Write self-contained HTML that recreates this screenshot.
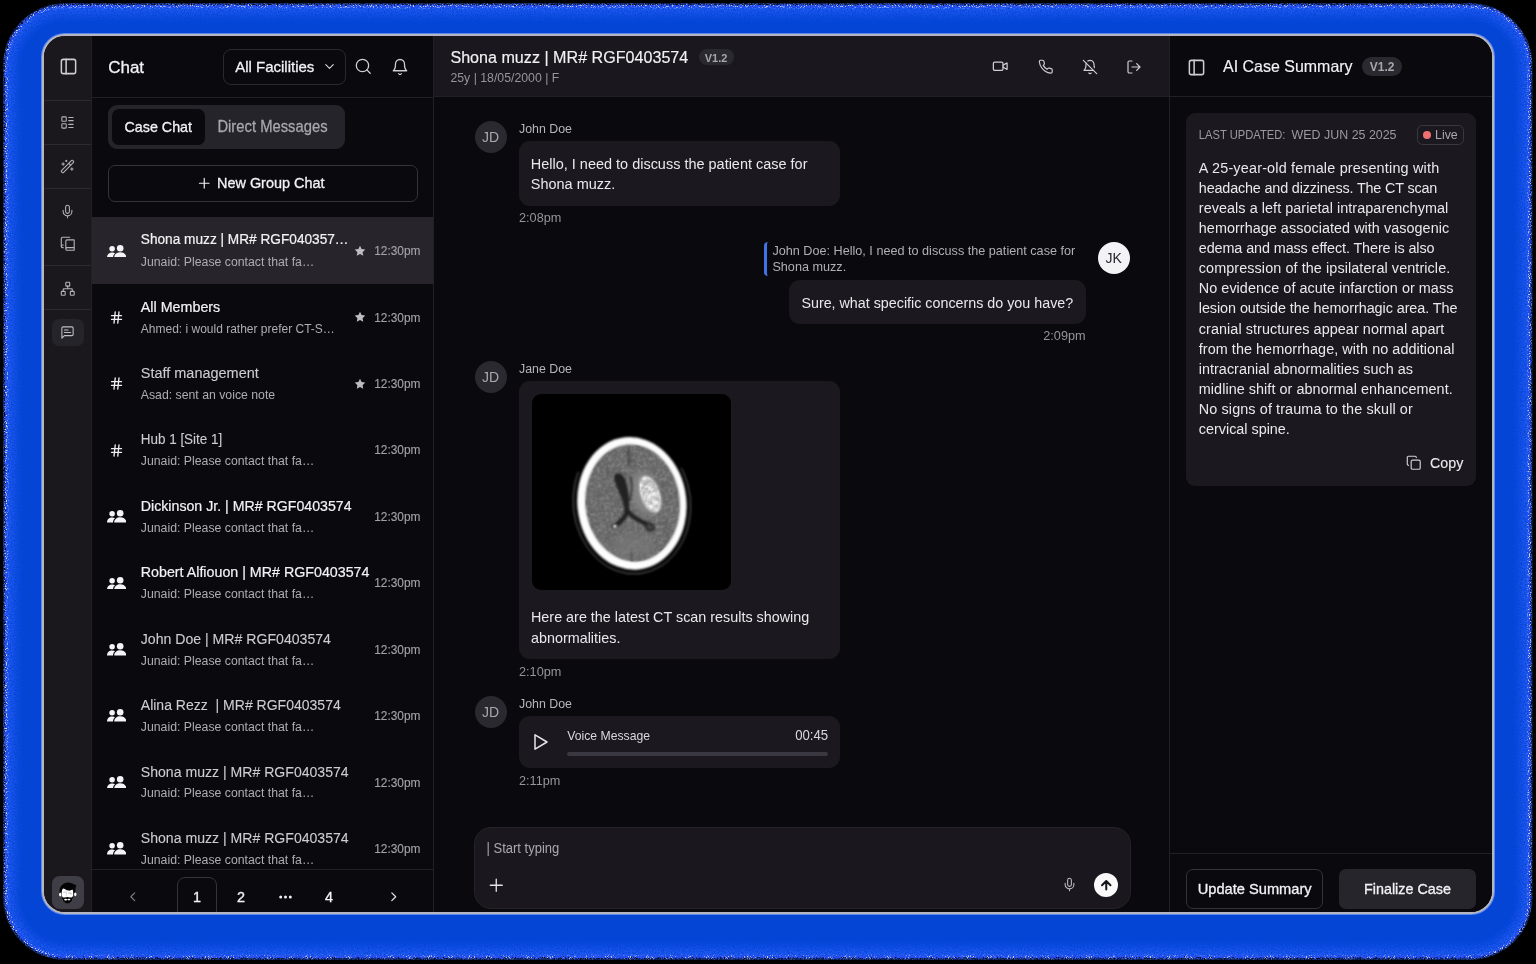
<!DOCTYPE html>
<html><head><meta charset="utf-8"><title>Chat</title>
<style>
html,body{margin:0;padding:0;background:#000;width:1536px;height:964px;overflow:hidden}
body{font-family:"Liberation Sans",sans-serif;position:relative}
.a{position:absolute}
.t{white-space:nowrap;margin:0;transform:scaleY(1.06);transform-origin:50% 52%}
#win{position:absolute;left:42px;top:34px;width:1452.4px;height:880.4px;box-sizing:border-box;border:2px solid #b6b6c0;border-radius:23px;overflow:hidden;background:#0a090d;box-shadow:0 0 0 1px #5d88ec}
#c{will-change:transform;position:absolute;left:-44px;top:-36px;width:1536px;height:964px}
</style></head><body>
<svg class="a" style="left:0;top:0" width="1536" height="964" viewBox="0 0 1536 964">
<defs>
<filter id="rough" x="-1%" y="-1%" width="102%" height="102%">
<feTurbulence type="fractalNoise" baseFrequency="0.85" numOctaves="2" seed="3" result="n"/>
<feDisplacementMap in="SourceGraphic" in2="n" scale="5" xChannelSelector="R" yChannelSelector="G"/>
</filter>
<filter id="glow" x="-2%" y="-2%" width="104%" height="104%">
<feGaussianBlur in="SourceGraphic" stdDeviation="4.5" result="bl"/>
<feTurbulence type="fractalNoise" baseFrequency="0.7" numOctaves="2" seed="8" result="n"/>
<feColorMatrix in="n" type="matrix" values="0 0 0 0 1  0 0 0 0 1  0 0 0 0 1  2.2 0 0 0 -0.45" result="na"/>
<feComposite in="bl" in2="na" operator="in"/>
</filter>
<filter id="spk" x="-2%" y="-2%" width="104%" height="104%">
<feGaussianBlur in="SourceGraphic" stdDeviation="1.2" result="bl"/>
<feTurbulence type="fractalNoise" baseFrequency="0.95" numOctaves="1" seed="21" result="n"/>
<feColorMatrix in="n" type="matrix" values="0 0 0 0 1  0 0 0 0 1  0 0 0 0 1  0 9 0 0 -5.1" result="na"/>
<feComposite in="bl" in2="na" operator="in"/>
</filter>
<clipPath id="fc"><rect x="3" y="3" width="1529.5" height="957" rx="62" ry="62"/></clipPath>
</defs>
<rect x="5" y="5" width="1525.5" height="953" rx="60" ry="60" fill="#1c3fe0" filter="url(#rough)"/>
<rect x="8" y="8" width="1519.5" height="947" rx="57" ry="57" fill="#0445d6"/>
<g clip-path="url(#fc)">
<rect x="8" y="8" width="1519.5" height="947" rx="57" ry="57" fill="none" stroke="#2f63ff" stroke-width="15" filter="url(#glow)" opacity="0.75"/>
<rect x="6" y="6" width="1523.5" height="951" rx="59" ry="59" fill="none" stroke="#ffffff" stroke-width="3.2" filter="url(#spk)" opacity="0.95"/>
</g>
</svg>
<div id="win"><div id="c">
<div class="a" style="left:0.00px;top:0.00px;width:1536.00px;height:964.00px;background:#0a090d;"></div>
<div class="a" style="left:40.00px;top:30.00px;width:51.50px;height:900.00px;background:#1a181d;"></div>
<div class="a" style="left:91.00px;top:30.00px;width:1.00px;height:900.00px;background:#222027;"></div>
<div class="a" style="left:433.00px;top:30.00px;width:1.00px;height:900.00px;background:#222027;"></div>
<div class="a" style="left:434.00px;top:30.00px;width:736.00px;height:66.00px;background:#1a181e;"></div>
<div class="a" style="left:92.00px;top:97.00px;width:341.00px;height:1.00px;background:#222027;"></div>
<div class="a" style="left:434.00px;top:96.00px;width:1070.00px;height:1.00px;background:#222027;"></div>
<div class="a" style="left:1169.00px;top:30.00px;width:1.00px;height:900.00px;background:#222027;"></div>
<div class="a" style="left:40.00px;top:100.00px;width:51.00px;height:1.00px;background:#2c2a31;"></div>
<div class="a" style="left:40.00px;top:144.00px;width:51.00px;height:1.00px;background:#2c2a31;"></div>
<div class="a" style="left:40.00px;top:188.00px;width:51.00px;height:1.00px;background:#2c2a31;"></div>
<div class="a" style="left:40.00px;top:265.00px;width:51.00px;height:1.00px;background:#2c2a31;"></div>
<div class="a" style="left:40.00px;top:309.00px;width:51.00px;height:1.00px;background:#2c2a31;"></div>
<svg class="a" style="left:58.70px;top:57.00px" width="19" height="19" viewBox="0 0 24 24" fill="none" stroke="#cfced4" stroke-width="1.9" stroke-linecap="round" stroke-linejoin="round" ><rect x="3" y="3" width="18" height="18" rx="2.5"/><path d="M9 3v18"/></svg>
<svg class="a" style="left:60.20px;top:115.20px" width="15" height="15" viewBox="0 0 24 24" fill="none" stroke="#b4b3ba" stroke-width="1.7" stroke-linecap="round" stroke-linejoin="round" ><rect x="3" y="3" width="7" height="7" rx="1"/><rect x="3" y="14" width="7" height="7" rx="1"/><path d="M14 4h7M14 9h7M14 15h7M14 20h7"/></svg>
<svg class="a" style="left:60.20px;top:159.30px" width="15" height="15" viewBox="0 0 24 24" fill="none" stroke="#b4b3ba" stroke-width="1.7" stroke-linecap="round" stroke-linejoin="round" ><path d="m21.64 3.64-1.28-1.28a1.21 1.21 0 0 0-1.72 0L2.36 18.64a1.21 1.21 0 0 0 0 1.72l1.28 1.28a1.2 1.2 0 0 0 1.72 0L21.64 5.36a1.2 1.2 0 0 0 0-1.72"/><path d="m14 7 3 3M5 6v4M19 14v4M10 2v2M7 8H3M21 16h-4M11 3H9"/></svg>
<svg class="a" style="left:60.20px;top:204.00px" width="15" height="15" viewBox="0 0 24 24" fill="none" stroke="#b4b3ba" stroke-width="1.7" stroke-linecap="round" stroke-linejoin="round" ><path d="M12 2a3 3 0 0 0-3 3v7a3 3 0 0 0 6 0V5a3 3 0 0 0-3-3Z"/><path d="M19 10v2a7 7 0 0 1-14 0v-2M12 19v3"/></svg>
<svg class="a" style="left:59.95px;top:236.25px" width="15.5" height="15.5" viewBox="0 0 24 24" fill="none" stroke="#b4b3ba" stroke-width="1.7" stroke-linecap="round" stroke-linejoin="round" ><path d="M2 16V4a2 2 0 0 1 2-2h11"/><path d="M22 18H11a2 2 0 1 0 0 4h10.5a.5.5 0 0 0 .5-.5v-15a.5.5 0 0 0-.5-.5H11a2 2 0 0 0-2 2v12"/><path d="M5 14H4a2 2 0 1 0 0 4h1"/></svg>
<svg class="a" style="left:59.95px;top:281.25px" width="15.5" height="15.5" viewBox="0 0 24 24" fill="none" stroke="#b4b3ba" stroke-width="1.7" stroke-linecap="round" stroke-linejoin="round" ><rect x="16" y="16" width="6" height="6" rx="1"/><rect x="2" y="16" width="6" height="6" rx="1"/><rect x="9" y="2" width="6" height="6" rx="1"/><path d="M5 16v-3a1 1 0 0 1 1-1h12a1 1 0 0 1 1 1v3M12 12V8"/></svg>
<div class="a" style="left:52.00px;top:318.50px;width:32.00px;height:27.50px;background:#26242b;border-radius:7px;"></div>
<svg class="a" style="left:60.20px;top:325.00px" width="15" height="15" viewBox="0 0 24 24" fill="none" stroke="#c0bfc6" stroke-width="1.7" stroke-linecap="round" stroke-linejoin="round" ><path d="M21 15a2 2 0 0 1-2 2H7l-4 4V5a2 2 0 0 1 2-2h14a2 2 0 0 1 2 2z"/><path d="M13 8H7M17 12H7"/></svg>
<div class="a" style="left:52.00px;top:876.00px;width:32.00px;height:33.00px;background:#3f3d45;border-radius:7.5px;"></div>
<svg class="a" style="left:58.3px;top:881.7px" width="20" height="22" viewBox="0 0 20 22">
<ellipse cx="2.2" cy="12.6" rx="1.1" ry="1.9" fill="#fff"/><ellipse cx="17.3" cy="12.3" rx="1.1" ry="1.9" fill="#fff"/>
<path d="M3.8 9 C3.8 4.6 15 4.6 15 9 L15 14 C15 19.6 12.4 21 9.4 21 C6.4 21 3.8 19.6 3.8 14 Z" fill="#fff"/>
<path d="M1.7 10.2 C1 5.5 4 1.2 9.2 0.5 C12 0 15.4 2.2 18.6 3.5 C17.2 4.6 17.6 6.4 17.3 10.4 L15.4 10.2 C15.4 8.4 15 7.8 14.6 7.6 C13 8.6 11.6 8.8 10.4 8.6 C8.4 8.2 6.6 7 5 6 C4 7.2 3.8 8.6 3.6 10.2 Z" fill="#040405"/>
<path d="M3.7 13.4 C3.7 19.6 6.4 21.2 9.4 21.2 C12.4 21.2 15.2 19.6 15.2 13.4 C14.6 15.4 13.4 15.6 12.2 15.5 L9.4 15.1 L6.6 15.5 C5.4 15.6 4.3 15.4 3.7 13.4 Z" fill="#040405"/>
<ellipse cx="7.6" cy="17.6" rx="1.5" ry="0.85" fill="#fff"/><ellipse cx="10.9" cy="17.5" rx="1.5" ry="0.85" fill="#fff"/>
<path d="M5.4 10.4 C6 9.8 7.2 9.8 7.8 10.6 M10.2 11 L13 11 L13 12.4" stroke="#a9a9b0" stroke-width="0.8" fill="none"/><path d="M8.8 9.4 L8.2 13.6" stroke="#c4c4cb" stroke-width="0.7"/>
</svg>
<div class="a t" style="left:108.20px;top:55.60px;font-size:17px;line-height:24px;color:#f2f2f4;-webkit-text-stroke:0.3px #f2f2f4;transform:scaleY(0.95);">Chat</div>
<div class="a" style="left:223.00px;top:49.00px;width:123.00px;height:36.00px;border-radius:8px;border:1px solid #2b2930;box-sizing:border-box;"></div>
<div class="a t" style="left:235.20px;top:56.80px;font-size:15px;line-height:20px;color:#f2f2f4;-webkit-text-stroke:0.3px #f2f2f4;transform:none;">All Facilities</div>
<svg class="a" style="left:322.00px;top:59.30px" width="15" height="15" viewBox="0 0 24 24" fill="none" stroke="#d8d7dc" stroke-width="1.8" stroke-linecap="round" stroke-linejoin="round" ><path d="m6 9 6 6 6-6"/></svg>
<svg class="a" style="left:354.25px;top:57.25px" width="18.5" height="18.5" viewBox="0 0 24 24" fill="none" stroke="#cfced4" stroke-width="1.7" stroke-linecap="round" stroke-linejoin="round" ><circle cx="11" cy="11" r="8"/><path d="m21 21-4.3-4.3"/></svg>
<svg class="a" style="left:391.00px;top:58.00px" width="18" height="18" viewBox="0 0 24 24" fill="none" stroke="#cfced4" stroke-width="1.7" stroke-linecap="round" stroke-linejoin="round" ><path d="M6 8a6 6 0 0 1 12 0c0 7 3 9 3 9H3s3-2 3-9"/><path d="M10.3 21a1.94 1.94 0 0 0 3.4 0"/></svg>
<div class="a" style="left:108.00px;top:105.00px;width:237.00px;height:44.00px;background:#26242b;border-radius:9px;"></div>
<div class="a" style="left:112.00px;top:109.00px;width:92.50px;height:36.00px;background:#0a090d;border-radius:7px;"></div>
<div class="a t" style="left:124.50px;top:117.00px;font-size:14.3px;line-height:20px;color:#f2f2f4;-webkit-text-stroke:0.3px #f2f2f4;">Case Chat</div>
<div class="a t" style="left:217.40px;top:117.00px;font-size:14.8px;line-height:20px;color:#a9a7ae;-webkit-text-stroke:0.25px #a9a7ae;">Direct Messages</div>
<div class="a" style="left:108.00px;top:165.00px;width:310.00px;height:36.50px;border-radius:7px;border:1px solid #35333a;box-sizing:border-box;"></div>
<svg class="a" style="left:196.35px;top:175.15px" width="16.5" height="16.5" viewBox="0 0 24 24" fill="none" stroke="#f2f2f4" stroke-width="1.7" stroke-linecap="round" stroke-linejoin="round" ><path d="M5 12h14M12 5v14"/></svg>
<div class="a t" style="left:217.00px;top:173.30px;font-size:14.45px;line-height:20px;color:#f2f2f4;-webkit-text-stroke:0.3px #f2f2f4;">New Group Chat</div>
<div class="a" style="left:92.00px;top:217.00px;width:341.00px;height:67.00px;background:#27242b;"></div>
<svg class="a" style="left:106.60px;top:244.50px" width="19.4" height="12.6" viewBox="0 0 19.4 12.6" fill="#f4f4f6">
<circle cx="5.1" cy="3.7" r="2.75"/><circle cx="13.2" cy="3.3" r="3.3"/>
<path d="M7.2 12.6 C7.2 9.2 10 7.3 13.2 7.3 C16.5 7.3 19.4 9.2 19.4 12.6 Z"/>
<path d="M0 12.6 C0 9.4 2.2 7.5 5.1 7.5 C6.3 7.5 7.4 7.8 8.1 8.3 C6.7 9.3 6.1 10.8 6 12.6 Z"/></svg>
<div class="a t" style="left:140.80px;top:230.30px;font-size:13.67px;line-height:20px;color:#f2f2f4;-webkit-text-stroke:0.2px #f2f2f4;white-space:pre;transform:scaleY(1.12);">Shona muzz | MR# RGF040357…</div>
<div class="a t" style="left:140.80px;top:254.10px;font-size:12.29px;line-height:16px;color:#aeadb4;">Junaid: Please contact that fa…</div>
<svg class="a" style="left:353.60px;top:244.90px" width="12" height="12" viewBox="0 0 24 24" fill="#bdbcc3"><path d="M12 1.5l3.2 6.7 7.3 1-5.3 5.1 1.3 7.3L12 18.1l-6.5 3.5 1.3-7.3L1.5 9.2l7.3-1z"/></svg>
<div class="a t" style="left:374.20px;top:243.20px;font-size:11.9px;line-height:16px;color:#a3a2a9;-webkit-text-stroke:0.12px #a3a2a9;">12:30pm</div>
<svg class="a" style="left:108.50px;top:309.72px" width="15" height="15" viewBox="0 0 24 24" fill="none" stroke="#f0f0f3" stroke-width="2.1" stroke-linecap="round" stroke-linejoin="round" ><path d="M4 9h16M4 15h16M10 3 8 21M16 3l-2 18"/></svg>
<div class="a t" style="left:140.80px;top:296.72px;font-size:14.31px;line-height:20px;color:#f2f2f4;-webkit-text-stroke:0.2px #f2f2f4;white-space:pre;">All Members</div>
<div class="a t" style="left:140.80px;top:320.52px;font-size:12.01px;line-height:16px;color:#aeadb4;">Ahmed: i would rather prefer CT-S…</div>
<svg class="a" style="left:353.60px;top:311.32px" width="12" height="12" viewBox="0 0 24 24" fill="#bdbcc3"><path d="M12 1.5l3.2 6.7 7.3 1-5.3 5.1 1.3 7.3L12 18.1l-6.5 3.5 1.3-7.3L1.5 9.2l7.3-1z"/></svg>
<div class="a t" style="left:374.20px;top:309.62px;font-size:11.9px;line-height:16px;color:#a3a2a9;-webkit-text-stroke:0.12px #a3a2a9;">12:30pm</div>
<svg class="a" style="left:108.50px;top:376.14px" width="15" height="15" viewBox="0 0 24 24" fill="none" stroke="#f0f0f3" stroke-width="2.1" stroke-linecap="round" stroke-linejoin="round" ><path d="M4 9h16M4 15h16M10 3 8 21M16 3l-2 18"/></svg>
<div class="a t" style="left:140.80px;top:363.14px;font-size:14.47px;line-height:20px;color:#cdccd2;-webkit-text-stroke:0.1px #cdccd2;white-space:pre;">Staff management</div>
<div class="a t" style="left:140.80px;top:386.94px;font-size:12.27px;line-height:16px;color:#aeadb4;">Asad: sent an voice note</div>
<svg class="a" style="left:353.60px;top:377.74px" width="12" height="12" viewBox="0 0 24 24" fill="#bdbcc3"><path d="M12 1.5l3.2 6.7 7.3 1-5.3 5.1 1.3 7.3L12 18.1l-6.5 3.5 1.3-7.3L1.5 9.2l7.3-1z"/></svg>
<div class="a t" style="left:374.20px;top:376.04px;font-size:11.9px;line-height:16px;color:#a3a2a9;-webkit-text-stroke:0.12px #a3a2a9;">12:30pm</div>
<svg class="a" style="left:108.50px;top:442.56px" width="15" height="15" viewBox="0 0 24 24" fill="none" stroke="#f0f0f3" stroke-width="2.1" stroke-linecap="round" stroke-linejoin="round" ><path d="M4 9h16M4 15h16M10 3 8 21M16 3l-2 18"/></svg>
<div class="a t" style="left:140.80px;top:429.56px;font-size:13.45px;line-height:20px;color:#cdccd2;-webkit-text-stroke:0.1px #cdccd2;white-space:pre;">Hub 1 [Site 1]</div>
<div class="a t" style="left:140.80px;top:453.36px;font-size:12.29px;line-height:16px;color:#aeadb4;">Junaid: Please contact that fa…</div>
<div class="a t" style="left:374.20px;top:442.46px;font-size:11.9px;line-height:16px;color:#a3a2a9;-webkit-text-stroke:0.12px #a3a2a9;">12:30pm</div>
<svg class="a" style="left:106.60px;top:510.18px" width="19.4" height="12.6" viewBox="0 0 19.4 12.6" fill="#f4f4f6">
<circle cx="5.1" cy="3.7" r="2.75"/><circle cx="13.2" cy="3.3" r="3.3"/>
<path d="M7.2 12.6 C7.2 9.2 10 7.3 13.2 7.3 C16.5 7.3 19.4 9.2 19.4 12.6 Z"/>
<path d="M0 12.6 C0 9.4 2.2 7.5 5.1 7.5 C6.3 7.5 7.4 7.8 8.1 8.3 C6.7 9.3 6.1 10.8 6 12.6 Z"/></svg>
<div class="a t" style="left:140.80px;top:495.98px;font-size:14.18px;line-height:20px;color:#f2f2f4;-webkit-text-stroke:0.2px #f2f2f4;white-space:pre;">Dickinson Jr. | MR# RGF0403574</div>
<div class="a t" style="left:140.80px;top:519.78px;font-size:12.29px;line-height:16px;color:#aeadb4;">Junaid: Please contact that fa…</div>
<div class="a t" style="left:374.20px;top:508.88px;font-size:11.9px;line-height:16px;color:#a3a2a9;-webkit-text-stroke:0.12px #a3a2a9;">12:30pm</div>
<svg class="a" style="left:106.60px;top:576.60px" width="19.4" height="12.6" viewBox="0 0 19.4 12.6" fill="#f4f4f6">
<circle cx="5.1" cy="3.7" r="2.75"/><circle cx="13.2" cy="3.3" r="3.3"/>
<path d="M7.2 12.6 C7.2 9.2 10 7.3 13.2 7.3 C16.5 7.3 19.4 9.2 19.4 12.6 Z"/>
<path d="M0 12.6 C0 9.4 2.2 7.5 5.1 7.5 C6.3 7.5 7.4 7.8 8.1 8.3 C6.7 9.3 6.1 10.8 6 12.6 Z"/></svg>
<div class="a t" style="left:140.80px;top:562.40px;font-size:14.26px;line-height:20px;color:#f2f2f4;-webkit-text-stroke:0.2px #f2f2f4;white-space:pre;">Robert Alfiouon | MR# RGF0403574</div>
<div class="a t" style="left:140.80px;top:586.20px;font-size:12.29px;line-height:16px;color:#aeadb4;">Junaid: Please contact that fa…</div>
<div class="a t" style="left:374.20px;top:575.30px;font-size:11.9px;line-height:16px;color:#a3a2a9;-webkit-text-stroke:0.12px #a3a2a9;">12:30pm</div>
<svg class="a" style="left:106.60px;top:643.02px" width="19.4" height="12.6" viewBox="0 0 19.4 12.6" fill="#f4f4f6">
<circle cx="5.1" cy="3.7" r="2.75"/><circle cx="13.2" cy="3.3" r="3.3"/>
<path d="M7.2 12.6 C7.2 9.2 10 7.3 13.2 7.3 C16.5 7.3 19.4 9.2 19.4 12.6 Z"/>
<path d="M0 12.6 C0 9.4 2.2 7.5 5.1 7.5 C6.3 7.5 7.4 7.8 8.1 8.3 C6.7 9.3 6.1 10.8 6 12.6 Z"/></svg>
<div class="a t" style="left:140.80px;top:628.82px;font-size:14.1px;line-height:20px;color:#cdccd2;-webkit-text-stroke:0.1px #cdccd2;white-space:pre;">John Doe | MR# RGF0403574</div>
<div class="a t" style="left:140.80px;top:652.62px;font-size:12.29px;line-height:16px;color:#aeadb4;">Junaid: Please contact that fa…</div>
<div class="a t" style="left:374.20px;top:641.72px;font-size:11.9px;line-height:16px;color:#a3a2a9;-webkit-text-stroke:0.12px #a3a2a9;">12:30pm</div>
<svg class="a" style="left:106.60px;top:709.44px" width="19.4" height="12.6" viewBox="0 0 19.4 12.6" fill="#f4f4f6">
<circle cx="5.1" cy="3.7" r="2.75"/><circle cx="13.2" cy="3.3" r="3.3"/>
<path d="M7.2 12.6 C7.2 9.2 10 7.3 13.2 7.3 C16.5 7.3 19.4 9.2 19.4 12.6 Z"/>
<path d="M0 12.6 C0 9.4 2.2 7.5 5.1 7.5 C6.3 7.5 7.4 7.8 8.1 8.3 C6.7 9.3 6.1 10.8 6 12.6 Z"/></svg>
<div class="a t" style="left:140.80px;top:695.24px;font-size:14.03px;line-height:20px;color:#cdccd2;-webkit-text-stroke:0.1px #cdccd2;white-space:pre;">Alina Rezz  | MR# RGF0403574</div>
<div class="a t" style="left:140.80px;top:719.04px;font-size:12.29px;line-height:16px;color:#aeadb4;">Junaid: Please contact that fa…</div>
<div class="a t" style="left:374.20px;top:708.14px;font-size:11.9px;line-height:16px;color:#a3a2a9;-webkit-text-stroke:0.12px #a3a2a9;">12:30pm</div>
<svg class="a" style="left:106.60px;top:775.86px" width="19.4" height="12.6" viewBox="0 0 19.4 12.6" fill="#f4f4f6">
<circle cx="5.1" cy="3.7" r="2.75"/><circle cx="13.2" cy="3.3" r="3.3"/>
<path d="M7.2 12.6 C7.2 9.2 10 7.3 13.2 7.3 C16.5 7.3 19.4 9.2 19.4 12.6 Z"/>
<path d="M0 12.6 C0 9.4 2.2 7.5 5.1 7.5 C6.3 7.5 7.4 7.8 8.1 8.3 C6.7 9.3 6.1 10.8 6 12.6 Z"/></svg>
<div class="a t" style="left:140.80px;top:761.66px;font-size:14.09px;line-height:20px;color:#cdccd2;-webkit-text-stroke:0.1px #cdccd2;white-space:pre;">Shona muzz | MR# RGF0403574</div>
<div class="a t" style="left:140.80px;top:785.46px;font-size:12.29px;line-height:16px;color:#aeadb4;">Junaid: Please contact that fa…</div>
<div class="a t" style="left:374.20px;top:774.56px;font-size:11.9px;line-height:16px;color:#a3a2a9;-webkit-text-stroke:0.12px #a3a2a9;">12:30pm</div>
<svg class="a" style="left:106.60px;top:842.28px" width="19.4" height="12.6" viewBox="0 0 19.4 12.6" fill="#f4f4f6">
<circle cx="5.1" cy="3.7" r="2.75"/><circle cx="13.2" cy="3.3" r="3.3"/>
<path d="M7.2 12.6 C7.2 9.2 10 7.3 13.2 7.3 C16.5 7.3 19.4 9.2 19.4 12.6 Z"/>
<path d="M0 12.6 C0 9.4 2.2 7.5 5.1 7.5 C6.3 7.5 7.4 7.8 8.1 8.3 C6.7 9.3 6.1 10.8 6 12.6 Z"/></svg>
<div class="a t" style="left:140.80px;top:828.08px;font-size:14.09px;line-height:20px;color:#cdccd2;-webkit-text-stroke:0.1px #cdccd2;white-space:pre;">Shona muzz | MR# RGF0403574</div>
<div class="a t" style="left:140.80px;top:851.88px;font-size:12.29px;line-height:16px;color:#aeadb4;">Junaid: Please contact that fa…</div>
<div class="a t" style="left:374.20px;top:840.98px;font-size:11.9px;line-height:16px;color:#a3a2a9;-webkit-text-stroke:0.12px #a3a2a9;">12:30pm</div>
<div class="a" style="left:92.00px;top:869.00px;width:341.00px;height:50.00px;background:#0a090d;"></div>
<div class="a" style="left:92.00px;top:868.50px;width:341.00px;height:1.00px;background:#222027;"></div>
<svg class="a" style="left:124.55px;top:889.25px" width="15.5" height="15.5" viewBox="0 0 24 24" fill="none" stroke="#7d7b83" stroke-width="1.9" stroke-linecap="round" stroke-linejoin="round" ><path d="m15 18-6-6 6-6"/></svg>
<div class="a" style="left:177.00px;top:877.00px;width:40.00px;height:42.00px;border-radius:8px;border:1px solid #35333a;box-sizing:border-box;"></div>
<div class="a t" style="left:177.00px;top:887.00px;font-size:14.4px;line-height:20px;color:#f2f2f4;width:40px;text-align:center;-webkit-text-stroke:0.3px #f2f2f4;">1</div>
<div class="a t" style="left:221.00px;top:887.00px;font-size:14.4px;line-height:20px;color:#f2f2f4;width:40px;text-align:center;-webkit-text-stroke:0.3px #f2f2f4;">2</div>
<svg class="a" style="left:278.5px;top:895.3px" width="13" height="4" viewBox="0 0 13 4" fill="#f0f0f3"><circle cx="1.7" cy="2" r="1.5"/><circle cx="6.5" cy="2" r="1.5"/><circle cx="11.3" cy="2" r="1.5"/></svg>
<div class="a t" style="left:309.00px;top:887.00px;font-size:14.4px;line-height:20px;color:#f2f2f4;width:40px;text-align:center;-webkit-text-stroke:0.3px #f2f2f4;">4</div>
<svg class="a" style="left:385.55px;top:889.25px" width="15.5" height="15.5" viewBox="0 0 24 24" fill="none" stroke="#e4e3e8" stroke-width="1.9" stroke-linecap="round" stroke-linejoin="round" ><path d="m9 18 6-6-6-6"/></svg>
<div class="a t" style="left:450.40px;top:46.10px;font-size:16.11px;line-height:22px;color:#f2f2f4;-webkit-text-stroke:0.15px #f2f2f4;">Shona muzz | MR# RGF0403574</div>
<div class="a" style="left:698.50px;top:49.30px;width:35.00px;height:16.20px;background:#2b2930;border-radius:8.1px;"></div>
<div class="a t" style="left:698.50px;top:50.50px;font-size:11px;line-height:14px;color:#a7a5ad;font-weight:700;width:35px;text-align:center;">V1.2</div>
<div class="a t" style="left:450.40px;top:70.40px;font-size:12.3px;line-height:16px;color:#96949c;">25y | 18/05/2000 | F</div>
<svg class="a" style="left:992.05px;top:58.35px" width="16.5" height="16.5" viewBox="0 0 24 24" fill="none" stroke="#cfced4" stroke-width="1.8" stroke-linecap="round" stroke-linejoin="round" ><path d="m16 13 5.223 3.482a.5.5 0 0 0 .777-.416V7.87a.5.5 0 0 0-.752-.432L16 10.5"/><rect x="2" y="6" width="14" height="12" rx="2"/></svg>
<svg class="a" style="left:1037.85px;top:59.05px" width="15.5" height="15.5" viewBox="0 0 24 24" fill="none" stroke="#cfced4" stroke-width="1.8" stroke-linecap="round" stroke-linejoin="round" ><path d="M22 16.92v3a2 2 0 0 1-2.18 2 19.79 19.79 0 0 1-8.63-3.07 19.5 19.5 0 0 1-6-6 19.79 19.79 0 0 1-3.07-8.67A2 2 0 0 1 4.11 2h3a2 2 0 0 1 2 1.72 12.84 12.84 0 0 0 .7 2.81 2 2 0 0 1-.45 2.11L8.09 9.91a16 16 0 0 0 6 6l1.27-1.27a2 2 0 0 1 2.11-.45 12.84 12.84 0 0 0 2.81.7A2 2 0 0 1 22 16.92z"/></svg>
<svg class="a" style="left:1081.70px;top:58.80px" width="16" height="16" viewBox="0 0 24 24" fill="none" stroke="#cfced4" stroke-width="1.8" stroke-linecap="round" stroke-linejoin="round" ><path d="M8.7 3A6 6 0 0 1 18 8a21.3 21.3 0 0 0 .6 5"/><path d="M17 17H3s3-2 3-9a4.67 4.67 0 0 1 .3-1.7"/><path d="M10.3 21a1.94 1.94 0 0 0 3.4 0"/><path d="m2 2 20 20"/></svg>
<svg class="a" style="left:1126.00px;top:58.80px" width="16" height="16" viewBox="0 0 24 24" fill="none" stroke="#cfced4" stroke-width="1.8" stroke-linecap="round" stroke-linejoin="round" ><path d="M9 21H5a2 2 0 0 1-2-2V5a2 2 0 0 1 2-2h4"/><path d="m16 17 5-5-5-5M21 12H9"/></svg>
<div class="a" style="left:474.60px;top:121.00px;width:32.00px;height:32.00px;background:#2b2930;border-radius:16px;"></div><div class="a t" style="left:474.60px;top:128.30px;font-size:14px;line-height:18px;color:#a9a7af;width:32px;text-align:center;">JD</div>
<div class="a t" style="left:519.00px;top:121.40px;font-size:12.38px;line-height:16px;color:#b7b5bc;">John Doe</div>
<div class="a" style="left:518.50px;top:141.00px;width:321.70px;height:64.50px;background:#1b191f;border-radius:11px;"></div>
<div class="a t" style="left:530.80px;top:153.80px;font-size:14.48px;line-height:20px;color:#e9e8ec;">Hello, I need to discuss the patient case for</div>
<div class="a t" style="left:530.80px;top:173.90px;font-size:14.48px;line-height:20px;color:#e9e8ec;">Shona muzz.</div>
<div class="a t" style="left:519.00px;top:209.60px;font-size:12.7px;line-height:16px;color:#96949c;">2:08pm</div>
<div class="a" style="left:764.3px;top:242px;width:8px;height:33.8px;box-sizing:border-box;border-left:3px solid #3f74e6;border-radius:4px 0 0 4px"></div>
<div class="a t" style="left:772.40px;top:243.00px;font-size:12.65px;line-height:16px;color:#b1afb7;">John Doe: Hello, I need to discuss the patient case for</div>
<div class="a t" style="left:772.40px;top:259.30px;font-size:12.65px;line-height:16px;color:#b1afb7;">Shona muzz.</div>
<div class="a" style="left:1097.70px;top:241.80px;width:32.00px;height:32.00px;background:#f3f3f5;border-radius:16px;"></div><div class="a t" style="left:1097.70px;top:249.10px;font-size:14px;line-height:18px;color:#26242b;width:32px;text-align:center;">JK</div>
<div class="a" style="left:789.00px;top:280.20px;width:297.00px;height:44.00px;background:#1b191f;border-radius:11px;"></div>
<div class="a t" style="left:801.40px;top:292.80px;font-size:14.31px;line-height:20px;color:#e9e8ec;">Sure, what specific concerns do you have?</div>
<div class="a t" style="left:685.60px;top:328.40px;font-size:12.7px;line-height:16px;color:#96949c;width:400px;text-align:right;">2:09pm</div>
<div class="a" style="left:474.60px;top:360.50px;width:32.00px;height:32.00px;background:#2b2930;border-radius:16px;"></div><div class="a t" style="left:474.60px;top:367.80px;font-size:14px;line-height:18px;color:#a9a7af;width:32px;text-align:center;">JD</div>
<div class="a t" style="left:519.00px;top:360.70px;font-size:12.38px;line-height:16px;color:#b7b5bc;">Jane Doe</div>
<div class="a" style="left:518.50px;top:380.80px;width:321.70px;height:278.50px;background:#1b191f;border-radius:11px;"></div>
<div class="a" style="left:531.50px;top:393.50px;width:199.50px;height:196.50px;background:#000;border-radius:9px;"></div>
<svg class="a" style="left:531.5px;top:393.5px" width="199.5" height="196.5" viewBox="0 0 199.5 196.5">
<defs>
<filter id="b1" x="-20%" y="-20%" width="140%" height="140%"><feGaussianBlur stdDeviation="0.85"/></filter>
<filter id="b2" x="-40%" y="-40%" width="180%" height="180%"><feGaussianBlur stdDeviation="3.2"/></filter>
<filter id="b3" x="-40%" y="-40%" width="180%" height="180%"><feGaussianBlur stdDeviation="1.3"/></filter>
<filter id="grain" x="0" y="0" width="100%" height="100%">
<feTurbulence type="fractalNoise" baseFrequency="0.32" numOctaves="3" seed="11" result="n"/>
<feColorMatrix in="n" type="matrix" values="0 0 0 0 0.6  0 0 0 0 0.6  0 0 0 0 0.6  1.5 0 0 0 -0.55" result="g"/>
<feComposite in="g" in2="SourceGraphic" operator="in"/>
</filter>
<filter id="grain2" x="0" y="0" width="100%" height="100%">
<feTurbulence type="fractalNoise" baseFrequency="0.22" numOctaves="2" seed="5" result="n"/>
<feColorMatrix in="n" type="matrix" values="0 0 0 0 1  0 0 0 0 1  0 0 0 0 1  2.2 0 0 0 -0.75" result="g"/>
<feComposite in="g" in2="SourceGraphic" operator="in"/>
</filter>
<filter id="mott" x="0" y="0" width="100%" height="100%">
<feTurbulence type="fractalNoise" baseFrequency="0.11" numOctaves="2" seed="4" result="n"/>
<feColorMatrix in="n" type="matrix" values="0 0 0 0 0.1  0 0 0 0 0.1  0 0 0 0 0.1  3.2 0 0 0 -1.45" result="g"/>
<feComposite in="g" in2="SourceGraphic" operator="in"/>
</filter>
<clipPath id="brainclip"><ellipse cx="100.6" cy="109" rx="47.4" ry="58.8" transform="rotate(-6 100.6 109)"/></clipPath>
<clipPath id="ringclip"><path d="M0 78 L60 78 L60 150 L140 150 L140 74 L199 74 L199 196 L0 196 Z"/></clipPath>
</defs>
<g filter="url(#b1)">
<g clip-path="url(#ringclip)"><ellipse cx="99.9" cy="109.6" rx="58.6" ry="70.4" transform="rotate(-6 99.9 109.6)" fill="none" stroke="#cfcfcf" stroke-width="0.9" opacity="0.55"/></g>
<ellipse cx="99.9" cy="109.4" rx="54.6" ry="66.4" transform="rotate(-6 99.9 109.4)" fill="#fdfdfd"/>
<ellipse cx="100.6" cy="109" rx="47.4" ry="58.8" transform="rotate(-6 100.6 109)" fill="#696969"/>
</g>
<g clip-path="url(#brainclip)">
<ellipse cx="100.6" cy="109" rx="47.4" ry="58.8" transform="rotate(-6 100.6 109)" fill="#999" filter="url(#grain)" opacity="0.4"/>
<ellipse cx="100.6" cy="109" rx="47.4" ry="58.8" transform="rotate(-6 100.6 109)" fill="#222" filter="url(#mott)" opacity="0.45"/>
<g filter="url(#b2)">
<ellipse cx="101" cy="152" rx="22" ry="14" fill="#7a7a7a" opacity="0.55"/>
<ellipse cx="112" cy="99.5" rx="14" ry="22" transform="rotate(-17 112 99.5)" fill="#868686" opacity="0.9"/>
</g>
<g filter="url(#b1)">
<path d="M96.4 55 L97 71" stroke="#3a3a3a" stroke-width="1.5" fill="none" stroke-linecap="round"/>
<path d="M82.6 81 C85.5 77.5 91.5 80 93.6 86.5 C95.6 93 96.6 99 97 105 L97.4 117 L92.4 117 C92 109 88.4 101.5 86.2 96 C84 90.5 81 85.4 82.6 81 Z" fill="#232323"/>
<path d="M98.6 83 C100.4 90 100 98 98 106" stroke="#333" stroke-width="1.7" fill="none" stroke-linecap="round"/>
<path d="M99.4 158 L100 170" stroke="#474747" stroke-width="1.4" fill="none" stroke-linecap="round"/>
<path d="M95 116 C94.5 123 89.5 127.5 81.6 132.6" stroke="#232323" stroke-width="4.4" fill="none" stroke-linecap="round"/>
<path d="M95.2 116 C99 123.5 108 126.5 117 131.6" stroke="#232323" stroke-width="4.2" fill="none" stroke-linecap="round"/>
<ellipse cx="117.8" cy="133" rx="4.4" ry="3.1" transform="rotate(28 117.8 133)" fill="#4a4a4a" stroke="#262626" stroke-width="2.2"/>
</g>
<g filter="url(#b3)">
<ellipse cx="118.2" cy="100.3" rx="10" ry="19.8" transform="rotate(-19 118.2 100.3)" fill="#bdbdbd"/><ellipse cx="113.5" cy="90" rx="6.5" ry="8" fill="#b4b4b4"/>
</g>
<ellipse cx="118.2" cy="100.3" rx="9.2" ry="18.6" transform="rotate(-19 118.2 100.3)" fill="#ffffff" filter="url(#grain2)" opacity="0.9"/>
<g filter="url(#b1)">
<ellipse cx="82.8" cy="132.2" rx="2" ry="1.5" transform="rotate(-35 82.8 132.2)" fill="#fff"/>
</g>
</g>
</svg>
<div class="a t" style="left:531.00px;top:607.40px;font-size:14.36px;line-height:20px;color:#e9e8ec;">Here are the latest CT scan results showing</div>
<div class="a t" style="left:531.00px;top:627.50px;font-size:14.36px;line-height:20px;color:#e9e8ec;">abnormalities.</div>
<div class="a t" style="left:519.00px;top:663.60px;font-size:12.7px;line-height:16px;color:#96949c;">2:10pm</div>
<div class="a" style="left:474.60px;top:695.60px;width:32.00px;height:32.00px;background:#2b2930;border-radius:16px;"></div><div class="a t" style="left:474.60px;top:702.90px;font-size:14px;line-height:18px;color:#a9a7af;width:32px;text-align:center;">JD</div>
<div class="a t" style="left:519.00px;top:696.10px;font-size:12.38px;line-height:16px;color:#b7b5bc;">John Doe</div>
<div class="a" style="left:518.50px;top:715.80px;width:321.70px;height:52.00px;background:#1b191f;border-radius:11px;"></div>
<svg class="a" style="left:533px;top:733px" width="16" height="18" viewBox="0 0 16 18" fill="none" stroke="#e6e5ea" stroke-width="1.5" stroke-linejoin="round"><path d="M2 1.8 L14 9 L2 16.2 Z"/></svg>
<div class="a t" style="left:567.30px;top:727.70px;font-size:12.21px;line-height:16px;color:#d9d8dd;">Voice Message</div>
<div class="a t" style="left:428.20px;top:727.70px;font-size:13.2px;line-height:16px;color:#d9d8dd;width:400px;text-align:right;">00:45</div>
<div class="a" style="left:567.30px;top:752.20px;width:261.00px;height:3.80px;background:#3a3840;border-radius:2px;"></div>
<div class="a t" style="left:519.00px;top:772.50px;font-size:12.7px;line-height:16px;color:#96949c;">2:11pm</div>
<div class="a" style="left:473.80px;top:827.30px;width:657.20px;height:82.20px;background:#1a181e;border-radius:17px;border:1px solid #24222a;box-sizing:border-box;"></div>
<div class="a t" style="left:486.50px;top:840.90px;font-size:13.0px;line-height:16px;color:#a9a7af;">| Start typing</div>
<svg class="a" style="left:486.25px;top:874.55px" width="20.5" height="20.5" viewBox="0 0 24 24" fill="none" stroke="#e4e3e8" stroke-width="1.55" stroke-linecap="round" stroke-linejoin="round" ><path d="M5 12h14M12 5v14"/></svg>
<svg class="a" style="left:1062.20px;top:877.10px" width="15" height="15" viewBox="0 0 24 24" fill="none" stroke="#bdbcc2" stroke-width="1.7" stroke-linecap="round" stroke-linejoin="round" ><path d="M12 2a3 3 0 0 0-3 3v7a3 3 0 0 0 6 0V5a3 3 0 0 0-3-3Z"/><path d="M19 10v2a7 7 0 0 1-14 0v-2M12 19v3"/></svg>
<div class="a" style="left:1093.80px;top:872.60px;width:24.40px;height:24.40px;background:#fafafa;border-radius:12.2px;"></div>
<svg class="a" style="left:1098.75px;top:877.55px" width="14.5" height="14.5" viewBox="0 0 24 24" fill="none" stroke="#16151a" stroke-width="3.3" stroke-linecap="round" stroke-linejoin="round" ><path d="m5 12 7-7 7 7M12 19V5"/></svg>
<svg class="a" style="left:1186.90px;top:57.50px" width="19" height="19" viewBox="0 0 24 24" fill="none" stroke="#cfced4" stroke-width="1.9" stroke-linecap="round" stroke-linejoin="round" ><rect x="3" y="3" width="18" height="18" rx="2.5"/><path d="M9 3v18"/></svg>
<div class="a t" style="left:1223.00px;top:56.40px;font-size:15.97px;line-height:22px;color:#f2f2f4;-webkit-text-stroke:0.15px #f2f2f4;">AI Case Summary</div>
<div class="a" style="left:1361.70px;top:57.30px;width:40.80px;height:19.20px;background:#2b2930;border-radius:9.6px;"></div>
<div class="a t" style="left:1361.70px;top:60.00px;font-size:12px;line-height:14px;color:#a7a5ad;font-weight:700;width:40.8px;text-align:center;">V1.2</div>
<div class="a" style="left:1186.30px;top:113.00px;width:289.70px;height:373.40px;background:#1b191f;border-radius:9px;"></div>
<div class="a t" style="left:1198.80px;top:127.20px;font-size:11.2px;line-height:16px;color:#9b99a1;">LAST UPDATED:</div>
<div class="a t" style="left:1291.60px;top:127.20px;font-size:12.43px;line-height:16px;color:#9b99a1;">WED JUN 25 2025</div>
<div class="a" style="left:1417.30px;top:125.00px;width:46.80px;height:19.70px;border-radius:5.5px;border:1px solid #3a3840;box-sizing:border-box;"></div>
<div class="a" style="left:1423.00px;top:131.00px;width:8.00px;height:8.00px;background:#f07070;border-radius:4px;"></div>
<div class="a t" style="left:1435.00px;top:127.10px;font-size:12.4px;line-height:16px;color:#a9a7af;">Live</div>
<div class="a t" style="left:1198.80px;top:157.90px;font-size:14.4px;line-height:20px;color:#e9e8ec;letter-spacing:0.194px;">A 25-year-old female presenting with</div>
<div class="a t" style="left:1198.80px;top:177.98px;font-size:14.4px;line-height:20px;color:#e9e8ec;letter-spacing:-0.168px;">headache and dizziness. The CT scan</div>
<div class="a t" style="left:1198.80px;top:198.06px;font-size:14.4px;line-height:20px;color:#e9e8ec;letter-spacing:0.058px;">reveals a left parietal intraparenchymal</div>
<div class="a t" style="left:1198.80px;top:218.14px;font-size:14.4px;line-height:20px;color:#e9e8ec;letter-spacing:0.044px;">hemorrhage associated with vasogenic</div>
<div class="a t" style="left:1198.80px;top:238.22px;font-size:14.4px;line-height:20px;color:#e9e8ec;letter-spacing:-0.106px;">edema and mass effect. There is also</div>
<div class="a t" style="left:1198.80px;top:258.30px;font-size:14.4px;line-height:20px;color:#e9e8ec;letter-spacing:0.087px;">compression of the ipsilateral ventricle.</div>
<div class="a t" style="left:1198.80px;top:278.38px;font-size:14.4px;line-height:20px;color:#e9e8ec;letter-spacing:0.047px;">No evidence of acute infarction or mass</div>
<div class="a t" style="left:1198.80px;top:298.46px;font-size:14.4px;line-height:20px;color:#e9e8ec;letter-spacing:-0.067px;">lesion outside the hemorrhagic area. The</div>
<div class="a t" style="left:1198.80px;top:318.54px;font-size:14.4px;line-height:20px;color:#e9e8ec;letter-spacing:0.064px;">cranial structures appear normal apart</div>
<div class="a t" style="left:1198.80px;top:338.62px;font-size:14.4px;line-height:20px;color:#e9e8ec;letter-spacing:0.054px;">from the hemorrhage, with no additional</div>
<div class="a t" style="left:1198.80px;top:358.70px;font-size:14.4px;line-height:20px;color:#e9e8ec;letter-spacing:0.018px;">intracranial abnormalities such as</div>
<div class="a t" style="left:1198.80px;top:378.78px;font-size:14.4px;line-height:20px;color:#e9e8ec;letter-spacing:0.053px;">midline shift or abnormal enhancement.</div>
<div class="a t" style="left:1198.80px;top:398.86px;font-size:14.4px;line-height:20px;color:#e9e8ec;letter-spacing:0.109px;">No signs of trauma to the skull or</div>
<div class="a t" style="left:1198.80px;top:418.94px;font-size:14.4px;line-height:20px;color:#e9e8ec;letter-spacing:-0.010px;">cervical spine.</div>
<svg class="a" style="left:1405.85px;top:455.25px" width="15.5" height="15.5" viewBox="0 0 24 24" fill="none" stroke="#d0cfd5" stroke-width="1.8" stroke-linecap="round" stroke-linejoin="round" ><rect width="14" height="14" x="8" y="8" rx="2"/><path d="M4 16c-1.1 0-2-.9-2-2V4c0-1.1.9-2 2-2h10c1.1 0 2 .9 2 2"/></svg>
<div class="a t" style="left:1430.00px;top:453.00px;font-size:14.26px;line-height:20px;color:#ececf0;-webkit-text-stroke:0.1px #ececf0;">Copy</div>
<div class="a" style="left:1170.00px;top:852.50px;width:330.00px;height:1.00px;background:#222027;"></div>
<div class="a" style="left:1186.20px;top:868.50px;width:137.00px;height:40.20px;border-radius:7px;border:1px solid #35333a;box-sizing:border-box;"></div>
<div class="a t" style="left:1186.20px;top:878.80px;font-size:14.65px;line-height:20px;color:#f2f2f4;width:137px;text-align:center;-webkit-text-stroke:0.3px #f2f2f4;">Update Summary</div>
<div class="a" style="left:1339.00px;top:868.50px;width:137.00px;height:40.20px;background:#27252c;border-radius:7px;"></div>
<div class="a t" style="left:1339.00px;top:878.80px;font-size:14.36px;line-height:20px;color:#f2f2f4;width:137px;text-align:center;-webkit-text-stroke:0.3px #f2f2f4;">Finalize Case</div>
</div></div>
</body></html>
